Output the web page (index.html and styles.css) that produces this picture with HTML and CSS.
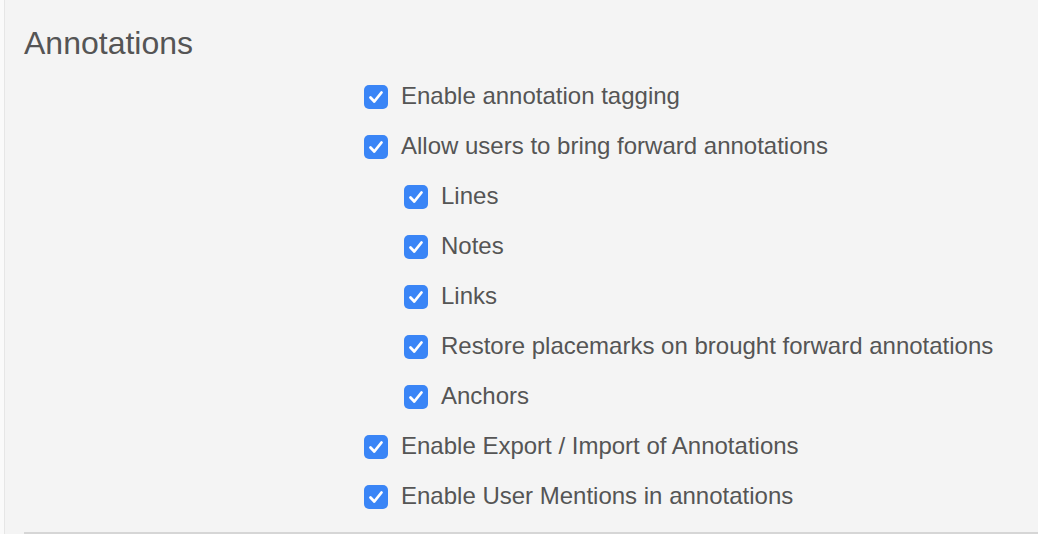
FILE: index.html
```html
<!doctype html>
<html>
	<head>
		<meta charset="utf-8" />
		<title>Annotations settings</title>
		<link rel="stylesheet" href="styles.css">
	</head>
	<body>
		<section class="panel">
			<h2>Annotations</h2>
			<ul class="options">
				<li>
					<span class="check"><svg viewBox="0 0 24 24"><path d="M6.5 12.5l3.8 4L17.5 7.5" /></svg></span>
					Enable annotation tagging
				</li>
				<li>
					<span class="check"><svg viewBox="0 0 24 24"><path d="M6.5 12.5l3.8 4L17.5 7.5" /></svg></span>
					Allow users to bring forward annotations
				</li>
				<li class="sub">
					<span class="check"><svg viewBox="0 0 24 24"><path d="M6.5 12.5l3.8 4L17.5 7.5" /></svg></span>
					Lines
				</li>
				<li class="sub">
					<span class="check"><svg viewBox="0 0 24 24"><path d="M6.5 12.5l3.8 4L17.5 7.5" /></svg></span>
					Notes
				</li>
				<li class="sub">
					<span class="check"><svg viewBox="0 0 24 24"><path d="M6.5 12.5l3.8 4L17.5 7.5" /></svg></span>
					Links
				</li>
				<li class="sub">
					<span class="check"><svg viewBox="0 0 24 24"><path d="M6.5 12.5l3.8 4L17.5 7.5" /></svg></span>
					Restore placemarks on brought forward annotations
				</li>
				<li class="sub">
					<span class="check"><svg viewBox="0 0 24 24"><path d="M6.5 12.5l3.8 4L17.5 7.5" /></svg></span>
					Anchors
				</li>
				<li>
					<span class="check"><svg viewBox="0 0 24 24"><path d="M6.5 12.5l3.8 4L17.5 7.5" /></svg></span>
					Enable Export / Import of Annotations
				</li>
				<li>
					<span class="check"><svg viewBox="0 0 24 24"><path d="M6.5 12.5l3.8 4L17.5 7.5" /></svg></span>
					Enable User Mentions in annotations
				</li>
			</ul>
			<div class="divider"></div>
		</section>
	</body>
</html>
```

FILE: styles.css
```css
* {
	box-sizing: border-box;
}

html {
	--font-main: "Liberation Sans", Arial, sans-serif;
	--color-fg: #555555;
	--color-bg: #fafafa;
	--color-panel: #f4f4f4;
	--color-edge: #e6e6e6;
	--color-rule: #d6d6d6;
	--color-accent: #3a85f6;
}

body {
	font-family: var(--font-main);
	background: var(--color-bg);
	color: var(--color-fg);
	margin: 0;
	padding: 0 0 0 4px;
	height: 534px;
	overflow: hidden;
}

.panel {
	background: var(--color-panel);
	border-left: 1px solid var(--color-edge);
	padding: 23px 0 0 19px;
	height: 100%;
}

h2 {
	font-size: 32px;
	font-weight: normal;
	line-height: 40px;
	margin: 0 0 8px;
}

.options {
	list-style: none;
	margin: 0 0 11px;
	padding: 0 0 0 340px;
}

.options li {
	display: flex;
	align-items: center;
	gap: 13px;
	height: 50px;
	font-size: 24px;
	line-height: 28px;
}

.options li.sub {
	padding-left: 40px;
}

.check {
	display: block;
	flex: none;
	width: 24px;
	height: 24px;
	margin-top: 2px;
	border-radius: 5px;
	background: var(--color-accent);
}

.check svg {
	display: block;
	width: 24px;
	height: 24px;
	fill: none;
	stroke: #fff;
	stroke-width: 2.8;
	stroke-linecap: round;
	stroke-linejoin: round;
}

.divider {
	border-top: 2px solid var(--color-rule);
}
```
